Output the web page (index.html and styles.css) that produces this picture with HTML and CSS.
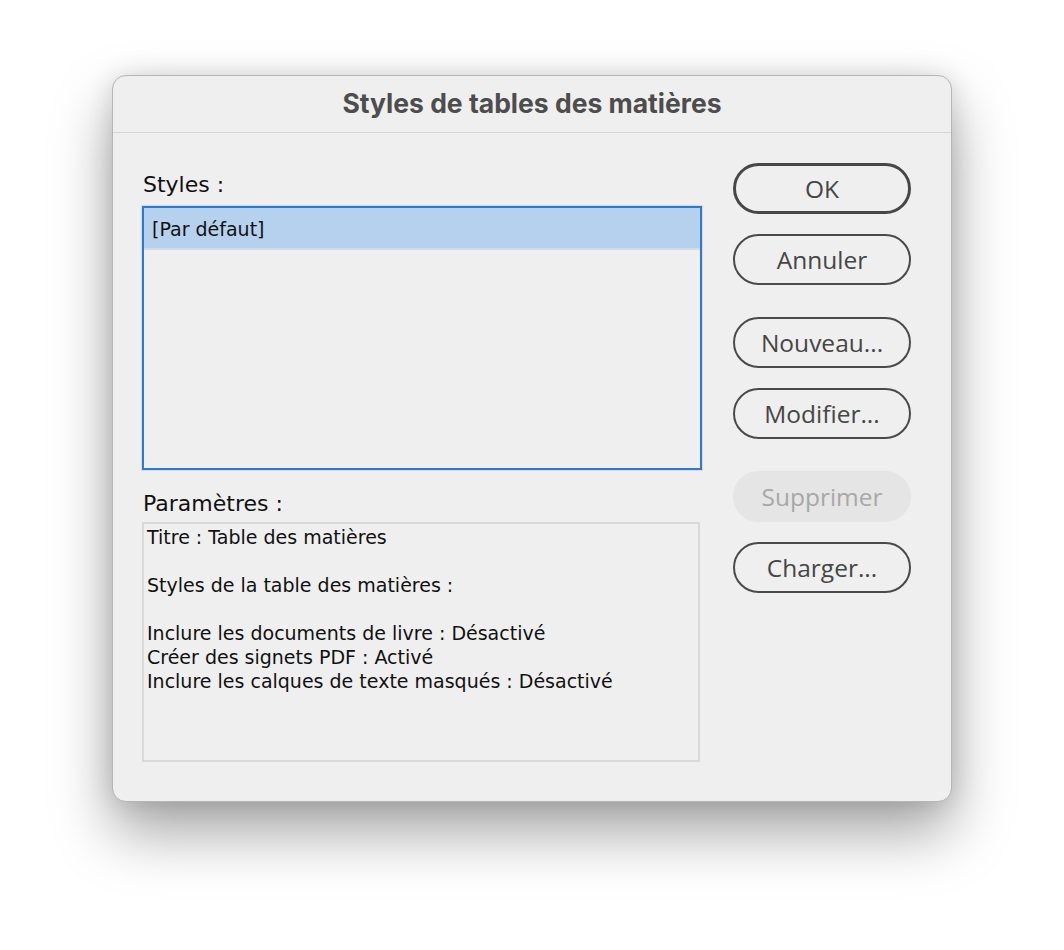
FILE: index.html
```html
<!DOCTYPE html>
<html lang="fr">
<head>
<meta charset="utf-8">
<title>Styles de tables des matières</title>
<link rel="stylesheet" href="styles.css">
</head>
<body>
<div class="dialog">
  <div class="titlebar">Styles de tables des matières</div>
  <div class="content">
    <div class="left">
      <div class="label">Styles :</div>
      <div class="listbox">
        <div class="row selected">[Par défaut]</div>
      </div>
      <div class="label label-params">Paramètres :</div>
      <div class="params">
        <div class="line">Titre : Table des matières</div>
        <div class="line blank"></div>
        <div class="line">Styles de la table des matières :</div>
        <div class="line blank"></div>
        <div class="line">Inclure les documents de livre : Désactivé</div>
        <div class="line">Créer des signets PDF : Activé</div>
        <div class="line">Inclure les calques de texte masqués : Désactivé</div>
      </div>
    </div>
    <div class="right">
      <div class="group">
        <button class="btn default">OK</button>
        <button class="btn">Annuler</button>
      </div>
      <div class="group">
        <button class="btn">Nouveau...</button>
        <button class="btn">Modifier...</button>
      </div>
      <div class="group">
        <button class="btn disabled">Supprimer</button>
        <button class="btn">Charger...</button>
      </div>
    </div>
  </div>
</div>
</body>
</html>
```

FILE: styles.css
```css
html, body {
  margin: 0;
  padding: 0;
  background: #ffffff;
}

body {
  width: 1064px;
  height: 950px;
  overflow: hidden;
  font-family: "DejaVu Sans", "Noto Sans", sans-serif;
}

.dialog {
  box-sizing: border-box;
  margin: 75px 0 0 112px;
  width: 840px;
  height: 727px;
  background: #efefef;
  border-radius: 14px;
  border: 1px solid #b5b5b5;
  box-shadow: 0 30px 60px rgba(0, 0, 0, 0.36), 0 0 24px rgba(0, 0, 0, 0.12);
  display: flex;
  flex-direction: column;
}

.titlebar {
  box-sizing: border-box;
  height: 57px;
  border-bottom: 1px solid #d3d3d3;
  display: flex;
  align-items: center;
  justify-content: center;
  font-family: Inter, Roboto, "Liberation Sans", sans-serif;
  font-weight: 700;
  font-size: 26.5px;
  color: #4d4d4d;
  padding-bottom: 3px;
}

.content {
  display: flex;
  padding: 0 0 0 29px;
}

.left {
  width: 560px;
  display: flex;
  flex-direction: column;
}

.label {
  font-size: 22px;
  color: #111;
  line-height: 28px;
  margin-top: 38px;
  margin-bottom: 7px;
  padding-left: 1px;
}

.label-params {
  margin-top: 20px;
  margin-bottom: 4px;
}

.listbox {
  box-sizing: border-box;
  width: 560px;
  height: 264px;
  border: 2px solid #2c7ad6;
  box-shadow: 0 0 0 1px #d9d9d9;
  background: #efefef;
}

.row {
  box-sizing: border-box;
  height: 42px;
  line-height: 39px;
  padding: 2px 0 0 8px;
  font-size: 19px;
  color: #111;
}

.row.selected {
  background: #b6d1ee;
  border-bottom: 2px solid #d0dbe7;
}

.params {
  box-sizing: border-box;
  width: 558px;
  height: 240px;
  border: 2px solid #d9d9d9;
  padding: 1px 0 0 3px;
  font-size: 19px;
  color: #111;
}

.line {
  height: 24px;
  line-height: 24px;
  white-space: nowrap;
}

.right {
  margin-left: 31px;
  padding-top: 30px;
  display: flex;
  flex-direction: column;
  gap: 32px;
}

.group {
  display: flex;
  flex-direction: column;
  gap: 20px;
}

.btn {
  box-sizing: border-box;
  width: 178px;
  height: 51px;
  border-radius: 26px;
  border: 2px solid #4a4a4a;
  background: #efefef;
  font-family: "Open Sans", "Noto Sans", sans-serif;
  font-size: 24.5px;
  color: #464646;
  padding: 0;
  margin: 0;
}

.btn.default {
  border-width: 3px;
  border-color: #474747;
}

.btn.disabled {
  border-color: #e5e5e5;
  background: #e5e5e5;
  color: #a8a8a8;
}
```
